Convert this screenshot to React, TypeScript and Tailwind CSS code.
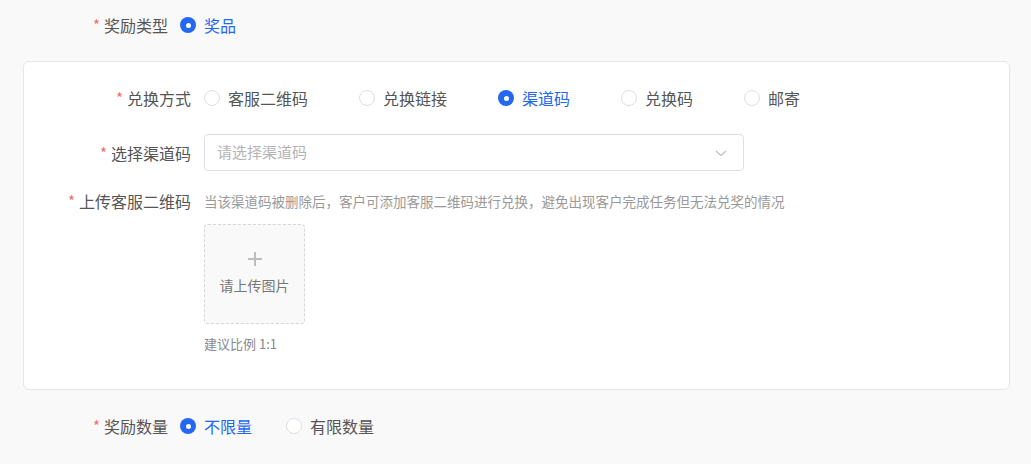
import type { ReactNode } from 'react';

const FONT = "font-['Noto_Sans_CJK_SC','Noto_Sans',sans-serif]";

interface RadioOption {
    label: string;
    value: string;
}

function Radio({ checked, label, className = '' }: { checked: boolean; label: string; className?: string }) {
    return (
        <label className={`flex items-center gap-[8px] cursor-pointer ${className}`}>
            {checked ? (
                <span className="flex items-center justify-center w-[16px] h-[16px] rounded-full bg-[#2468f2]">
                    <span className="w-[5px] h-[5px] rounded-full bg-white" />
                </span>
            ) : (
                <span className="w-[16px] h-[16px] rounded-full border border-[#dcdfe6] bg-white" />
            )}
            <span className={`text-[16px] leading-[22px] ${checked ? 'text-[#2468f2]' : 'text-[#555]'}`}>{label}</span>
        </label>
    );
}

function RadioGroup({ options, value, gap }: { options: RadioOption[]; value: string; gap: string }) {
    return (
        <div className={`flex items-center ${gap}`}>
            {options.map((opt) => (
                <Radio key={opt.value} checked={opt.value === value} label={opt.label} />
            ))}
        </div>
    );
}

function FormLabel({ children, width }: { children: ReactNode; width: string }) {
    return (
        <div className={`${width} shrink-0 flex justify-end items-center text-[16px] leading-[22px] text-[#555]`}>
            <span className="text-[#f56c6c] mr-[4px] text-[15px]">*</span>
            {children}
        </div>
    );
}

const exchangeOptions: RadioOption[] = [
    { label: '客服二维码', value: 'qrcode' },
    { label: '兑换链接', value: 'link' },
    { label: '渠道码', value: 'channel' },
    { label: '兑换码', value: 'code' },
    { label: '邮寄', value: 'mail' },
];

const amountOptions: RadioOption[] = [
    { label: '不限量', value: 'unlimited' },
    { label: '有限数量', value: 'limited' },
];

export default function App() {
    return (
        <div className={`w-[1031px] h-[464px] bg-[#f9f9f9] ${FONT}`}>
            {/* 奖励类型 */}
            <div className="flex items-center h-[50px]">
                <FormLabel width="w-[168px]">奖励类型</FormLabel>
                <div className="ml-[12px]">
                    <Radio checked label="奖品" />
                </div>
            </div>

            {/* prize settings card */}
            <div className="ml-[23px] mr-[21px] mt-[11px] bg-white border border-[#e6e6e6] rounded-[6px] pt-[24px] pb-[35px]">
                <div className="flex items-center h-[24px]">
                    <FormLabel width="w-[167px]">兑换方式</FormLabel>
                    <div className="ml-[13px]">
                        <RadioGroup options={exchangeOptions} value="channel" gap="gap-[51px]" />
                    </div>
                </div>

                <div className="flex items-center mt-6">
                    <FormLabel width="w-[167px]">选择渠道码</FormLabel>
                    <div className="ml-[13px] w-[540px] h-[37px] flex items-center justify-between px-[12px] border border-[#dcdfe6] rounded-[4px] bg-white">
                        <span className="text-[15px] text-[#b4b4b4]">请选择渠道码</span>
                        <svg width="14" height="14" viewBox="0 0 14 14" fill="none" className="mr-[3px]">
                            <path d="M2 5 L7 9.5 L12 5" stroke="#bfbfbf" strokeWidth="1.2" />
                        </svg>
                    </div>
                </div>

                <div className="flex items-start mt-[19px]">
                    <FormLabel width="w-[167px]">上传客服二维码</FormLabel>
                    <div className="ml-[13px] flex flex-col">
                        <p className="text-[13.5px] leading-[22px] text-[#999]">
                            当该渠道码被删除后，客户可添加客服二维码进行兑换，避免出现客户完成任务但无法兑奖的情况
                        </p>
                        <div className="mt-3 w-[101px] h-[100px] flex flex-col items-center justify-center bg-[#f9f9f9] border border-dashed border-[#d6d6d6] rounded-[4px]">
                            <svg width="16" height="16" viewBox="0 0 16 16" className="mt-[-2px]">
                                <path d="M8 1 V15 M1 8 H15" stroke="#bdbdbd" strokeWidth="2" />
                            </svg>
                            <span className="mt-[8px] text-[14px] leading-[20px] text-[#777]">请上传图片</span>
                        </div>
                        <span className="mt-[10px] text-[13px] leading-[20px] text-[#888]">建议比例 1:1</span>
                    </div>
                </div>
            </div>

            {/* 奖励数量 */}
            <div className="flex items-center h-[72px]">
                <FormLabel width="w-[168px]">奖励数量</FormLabel>
                <div className="ml-[12px]">
                    <RadioGroup options={amountOptions} value="unlimited" gap="gap-[34px]" />
                </div>
            </div>
        </div>
    );
}
